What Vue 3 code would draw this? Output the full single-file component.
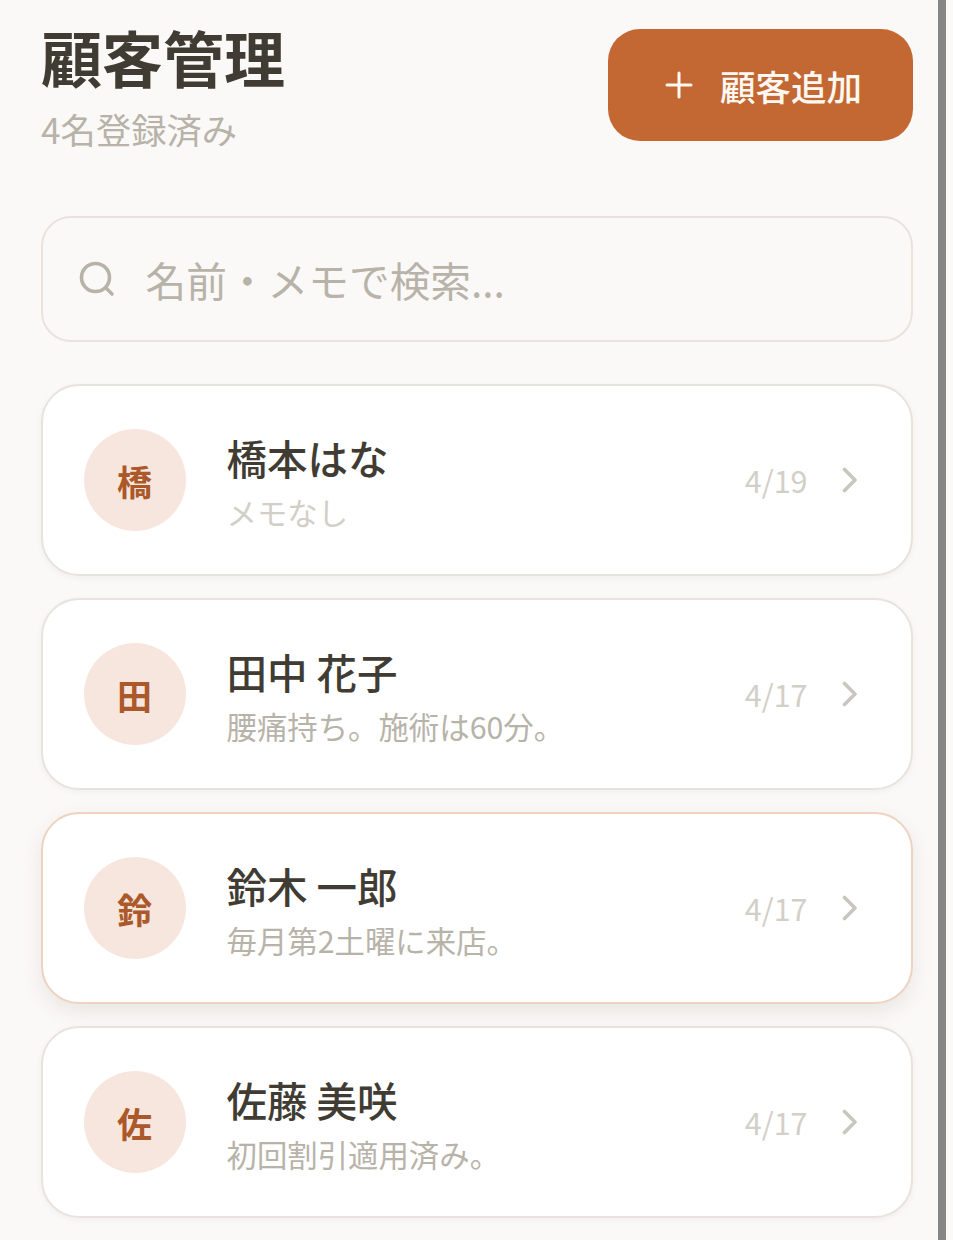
<script setup>
const customers = [
  { id: 1, initial: '橋', name: '橋本はな', memo: 'メモなし', empty: true, date: '4/19' },
  { id: 2, initial: '田', name: '田中 花子', memo: '腰痛持ち。施術は60分。', date: '4/17' },
  { id: 3, initial: '鈴', name: '鈴木 一郎', memo: '毎月第2土曜に来店。', date: '4/17', active: true },
  { id: 4, initial: '佐', name: '佐藤 美咲', memo: '初回割引適用済み。', date: '4/17' }
]
</script>

<template>
  <div class="page">
    <main class="content">
      <header class="head">
        <div class="titles">
          <h1 class="title">顧客管理</h1>
          <p class="count">4名登録済み</p>
        </div>
        <button class="add" type="button">
          <svg class="plus" viewBox="0 0 28 28" fill="none" stroke="currentColor" stroke-width="3" stroke-linecap="round">
            <path d="M14 2v24M2 14h24" />
          </svg>
          <span>顧客追加</span>
        </button>
      </header>

      <div class="search">
        <svg class="glass" viewBox="0 0 36 36" fill="none" stroke="currentColor" stroke-width="3.6" stroke-linecap="round">
          <circle cx="16.5" cy="16.5" r="14" />
          <path d="M27 27l6 6" />
        </svg>
        <span class="placeholder">名前・メモで検索...</span>
      </div>

      <ul class="list">
        <li v-for="c in customers" :key="c.id" class="card" :class="{ active: c.active }">
          <div class="avatar"><span class="initial">{{ c.initial }}</span></div>
          <div class="info">
            <div class="name">{{ c.name }}</div>
            <div class="memo" :class="{ empty: c.empty }">{{ c.memo }}</div>
          </div>
          <span class="date">{{ c.date }}</span>
          <svg class="chev" viewBox="0 0 16 26" fill="none" stroke="currentColor" stroke-width="3.6" stroke-linecap="round" stroke-linejoin="round">
            <path d="M2.5 2.5l10.5 10.5-10.5 10.5" />
          </svg>
        </li>
      </ul>
    </main>
    <div class="scrollbar"></div>
  </div>
</template>

<style>
html, body { margin: 0; background: #fbf9f7; }
</style>

<style scoped>
.page {
  display: flex;
  width: 953px;
  height: 1240px;
  overflow: hidden;
  background: #fbf9f7;
  font-family: "Noto Sans CJK JP", "Noto Sans", sans-serif;
}
.content {
  box-sizing: border-box;
  width: 938px;
  flex: none;
  padding: 29px 25px 0 41px;
}
.head {
  display: flex;
  justify-content: space-between;
  align-items: flex-start;
}
.titles { height: 112px; }
.title {
  margin: -16px 0 0;
  font-size: 61px;
  line-height: 88px;
  font-weight: 700;
  color: #403c33;
}
.count {
  margin: 3px 0 0;
  font-size: 35.3px;
  line-height: 50px;
  color: #b8b3a9;
}
.add {
  box-sizing: border-box;
  width: 305px;
  height: 112px;
  display: flex;
  align-items: center;
  gap: 27px;
  padding: 0 0 0 57px;
  border: none;
  border-radius: 32px;
  background: #c46833;
  color: #fdf8f2;
  font: inherit;
  font-size: 35.5px;
  font-weight: 500;
}
.plus { width: 28px; height: 28px; flex: none; }
.search {
  box-sizing: border-box;
  height: 126px;
  margin-top: 75px;
  display: flex;
  align-items: center;
  gap: 31px;
  padding: 0 35.5px;
  border: 2.5px solid #e8e3dd;
  border-radius: 30px;
  background: #fbf9f7;
}
.glass { width: 36px; height: 36px; flex: none; color: #b8b3a9; }
.placeholder { font-size: 40.7px; color: #b8b3a9; }
.list {
  list-style: none;
  margin: 42px 0 0;
  padding: 0;
  display: flex;
  flex-direction: column;
  gap: 22px;
}
.card {
  box-sizing: border-box;
  width: 872px;
  height: 192px;
  display: flex;
  align-items: center;
  padding: 0 53.5px 0 40.5px;
  border: 2.5px solid #e8e3dd;
  border-radius: 38px;
  background: #fff;
  box-shadow: 0 2px 6px rgba(64, 60, 51, 0.05);
}
.card.active {
  border-color: #edd3c0;
  box-shadow: 0 8px 20px rgba(64, 60, 51, 0.1);
}
.avatar {
  width: 102px;
  height: 102px;
  flex: none;
  display: flex;
  align-items: center;
  justify-content: center;
  border-radius: 50%;
  background: #f7e6dd;
  color: #ab582b;
  font-size: 35px;
  font-weight: 700;
}
.info { flex: 1; min-width: 0; margin-left: 41px; }
.name {
  font-size: 40.5px;
  line-height: 54px;
  font-weight: 500;
  color: #403c33;
  margin-top: 3px;
}
.memo {
  margin-top: 6px;
  font-size: 30.4px;
  line-height: 42px;
  color: #b8b3a9;
}
.memo.empty { color: #d2cfc8; }
.date { font-size: 30.5px; color: #d2cfc8; }
.chev { width: 16px; height: 26px; flex: none; margin-left: 34px; color: #c9c6bf; }
.scrollbar {
  width: 8px;
  flex: none;
  background: #868686;
}
</style>
